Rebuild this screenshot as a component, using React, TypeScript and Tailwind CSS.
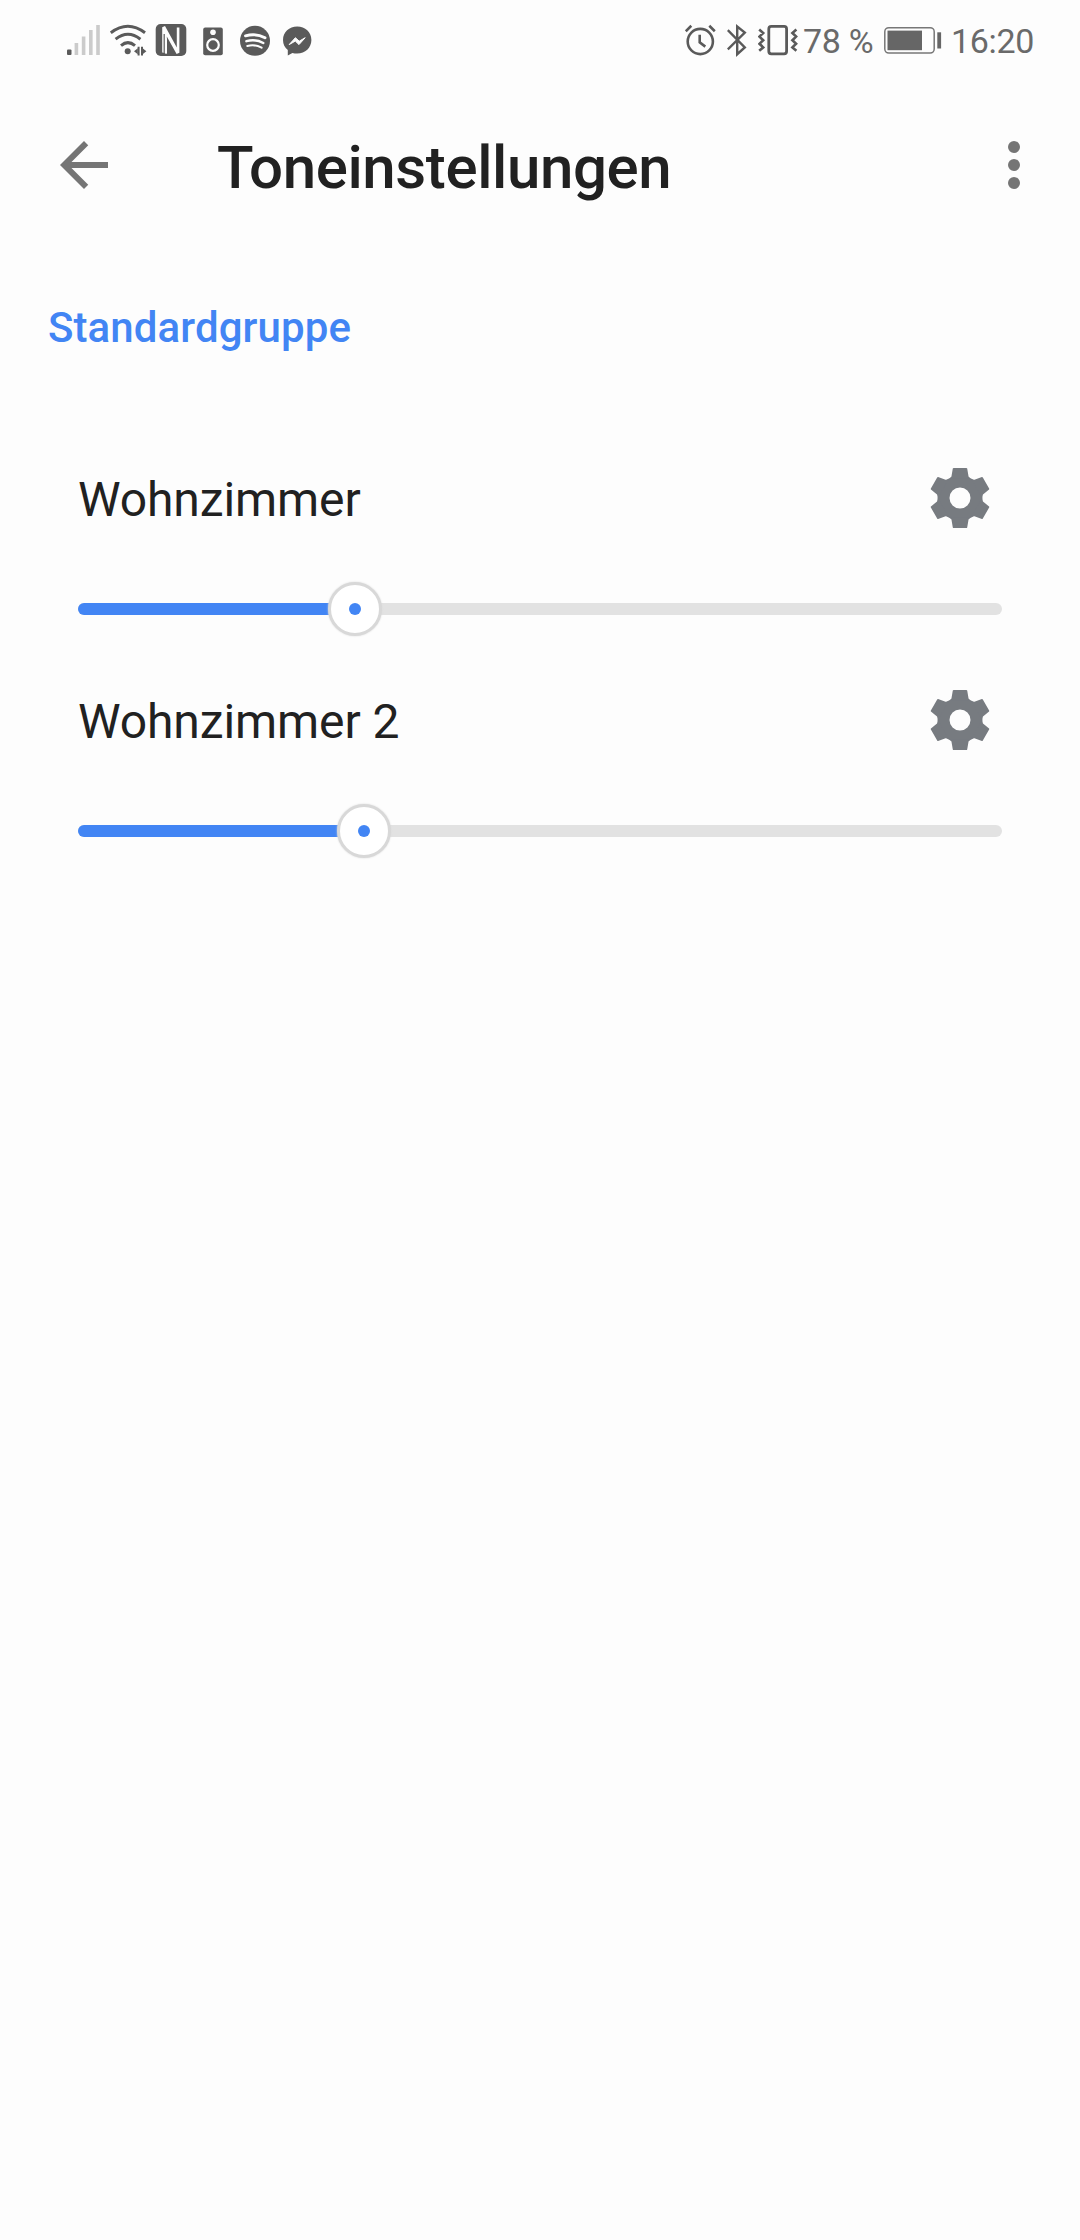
import React, { useState } from 'react';

const SignalIcon = () => (
  <svg width="34" height="36" viewBox="0 0 34 36" fill="#cbcbcb">
    <rect x="0" y="27.5" width="4.5" height="5.5" rx="1" fill="#5a5a5a" />
    <rect x="7.6" y="21" width="3.6" height="12" />
    <rect x="14.8" y="14.5" width="3.6" height="18.5" />
    <rect x="22" y="8" width="3.6" height="25" />
    <rect x="29.2" y="3" width="3.6" height="30" />
  </svg>
);

const WifiIcon = () => (
  <svg width="38" height="36" viewBox="0 0 38 36" fill="none" stroke="#5a5a5a" strokeWidth="3">
    <path d="M.8 10.8Q17.8 -2.2 35 10.8" />
    <path d="M5.6 17.2Q17.9 7.4 30.4 17.2" />
    <path d="M11 23.6Q17.9 17.6 25 23.6" />
    <circle cx="17.7" cy="29.2" r="3" fill="#5a5a5a" stroke="none" />
    <path d="M28.6 24.8v8.6M32 24.8v8.6" strokeWidth="2" />
    <path d="M24 29.2l3.8-3v6zM36.4 29.2l-3.8-3v6z" fill="#5a5a5a" stroke="none" />
  </svg>
);

const NfcIcon = () => (
  <svg width="32" height="36" viewBox="0 0 32 36">
    <rect x=".7" y="2" width="30.6" height="32" rx="5" fill="#5a5a5a" />
    <path d="M7.2 30.5V5.2L10 4L21.8 25.5V5.5H24.4V30.8L21.6 32L11.8 14.5V31.5z" fill="#fdfdfd" />
    <path d="M9.8 13V31.5H12V17z" fill="#fdfdfd" />
    <path d="M9.2 12V32" stroke="#5a5a5a" strokeWidth="1.2" />
  </svg>
);

const SpeakerIcon = () => (
  <svg width="20" height="36" viewBox="0 0 20 36">
    <rect x=".2" y="5.6" width="19.6" height="27.6" rx="2" fill="#5a5a5a" />
    <circle cx="10" cy="10.2" r="2.8" fill="#fdfdfd" />
    <circle cx="10" cy="23" r="5.8" fill="none" stroke="#fdfdfd" strokeWidth="2.2" />
  </svg>
);

const SpotifyIcon = () => (
  <svg width="30" height="36" viewBox="0 0 30 36" fill="none" stroke="#fdfdfd" strokeLinecap="round">
    <circle cx="15" cy="18.8" r="15" fill="#5a5a5a" stroke="none" />
    <path d="M5.5 13.8Q16 10.8 25 15.8" strokeWidth="2.9" />
    <path d="M6.4 19.1Q15.5 16.6 23.3 21" strokeWidth="2.5" />
    <path d="M7.3 24Q15 22 21.6 25.7" strokeWidth="2" />
  </svg>
);

const MessengerIcon = () => (
  <svg width="29" height="36" viewBox="0 0 29 36">
    <path d="M14.2 4.6C6.2 4.6 0 10.3 0 18c0 4.2 1.8 7.6 4.8 10.1v5.3l4.6-2.5c1.5.4 3.1.6 4.8.6 8 0 14.2-5.8 14.2-13.5S22.2 4.6 14.2 4.6z" fill="#5a5a5a" />
    <path d="M6.2 22.6l6.2-6.9 3.8 3.5 6-3.5-6.2 6.9-3.7-3.5z" fill="#fdfdfd" stroke="#fdfdfd" strokeWidth="1" strokeLinejoin="round" />
  </svg>
);

const AlarmIcon = () => (
  <svg width="31" height="36" viewBox="0 0 31 36" fill="none" stroke="#5a5a5a" strokeWidth="2.6">
    <circle cx="15.3" cy="19.5" r="12.6" />
    <path d="M.8 9.2l5.5-5.4M29.8 9.2l-5.5-5.4M14.7 12.8v7.6l5.6 4.2" />
  </svg>
);

const BluetoothIcon = () => (
  <svg width="20" height="36" viewBox="0 0 20 36" fill="none" stroke="#5a5a5a" strokeWidth="2.4">
    <path d="M.8 8.2l17 17.2-7.6 6.8V4.6l7.6 6L.8 27.4" />
  </svg>
);

const VibrateIcon = () => (
  <svg width="40" height="36" viewBox="0 0 40 36" fill="none" stroke="#5a5a5a">
    <rect x="10.8" y="4.4" width="17.8" height="27.4" rx="2.5" strokeWidth="2.8" />
    <path d="M1.2 7.5l4 3.5-3.7 3.6 3.7 3.6-3.7 3.6 3.7 3.6-4 3.4M38.4 7.5l-4 3.5 3.7 3.6-3.7 3.6 3.7 3.6-3.7 3.6 4 3.4" strokeWidth="2.6" />
  </svg>
);

const BatteryIcon = () => (
  <svg width="58" height="36" viewBox="0 0 58 36">
    <rect x=".8" y="5.7" width="49.4" height="25.4" rx="4" fill="none" stroke="#777" strokeWidth="1.5" />
    <rect x="3.5" y="8.6" width="34.5" height="19.6" fill="#666" />
    <rect x="53.3" y="10.3" width="3.8" height="16.2" fill="#666" />
  </svg>
);

const StatusBar = () => (
  <div className="flex h-20 items-center justify-between pl-[67px] pr-[45px] text-[34px] leading-none text-[#6a6a6a]">
    <div className="flex items-center">
      <SignalIcon />
      <span className="ml-[9px]"><WifiIcon /></span>
      <span className="ml-[7px]"><NfcIcon /></span>
      <span className="ml-4"><SpeakerIcon /></span>
      <span className="ml-[17px]"><SpotifyIcon /></span>
      <span className="ml-[13px]"><MessengerIcon /></span>
    </div>
    <div className="flex items-center">
      <AlarmIcon />
      <span className="ml-[11px]"><BluetoothIcon /></span>
      <span className="ml-[11px]"><VibrateIcon /></span>
      <span className="ml-[5px] w-[81px] whitespace-nowrap pt-px tracking-[-0.3px]">78 %</span>
      <BatteryIcon />
      <span className="ml-[9px] w-[84px] whitespace-nowrap pt-px tracking-[-0.3px]">16:20</span>
    </div>
  </div>
);

const Header = () => (
  <header className="flex h-[170px] items-center pl-12 pr-[30px]">
    <button aria-label="Zurück">
      <svg width="72" height="72" viewBox="0 0 24 24" fill="#757575">
        <path d="M20 11H7.83l5.59-5.59L12 4l-8 8 8 8 1.41-1.41L7.83 13H20v-2z" />
      </svg>
    </button>
    <h1 className="ml-[97px] flex-1 pt-[5px] text-[60px] font-medium leading-none tracking-[-0.4px] text-[#212121]">Toneinstellungen</h1>
    <button aria-label="Mehr">
      <svg width="72" height="72" viewBox="0 0 24 24" fill="#757575">
        <circle cx="12" cy="6" r="2" />
        <circle cx="12" cy="12" r="2" />
        <circle cx="12" cy="18" r="2" />
      </svg>
    </button>
  </header>
);

const TEETH = [0, 60, 120, 180, 240, 300];

const GearIcon = () => (
  <svg width="72" height="72" viewBox="-12 -12 24 24" fill="#777b80">
    <circle r="5.5" fill="none" stroke="#777b80" strokeWidth="4" />
    {TEETH.map(a => (
      <path key={a} d="M-3.5 -6.4L-2.85 -7.2L-2.4 -9.8Q-2.35 -10 -2.1 -10H2.1Q2.35 -10 2.4 -9.8L2.85 -7.2L3.5 -6.4z" transform={`rotate(${a})`} />
    ))}
  </svg>
);

interface SpeakerRowProps {
  name: string;
  initial: number;
}

const SpeakerRow: React.FC<SpeakerRowProps> = ({ name, initial }) => {
  const [volume, setVolume] = useState<number>(initial);

  return (
    <div className="h-[222px] px-[78px] pt-[42px]">
      <div className="flex h-[72px] items-center justify-between">
        <span className="pt-1 text-[48px] leading-none tracking-[-0.1px] text-[#212121]">{name}</span>
        <button aria-label="Einstellungen" className="mr-[6px]"><GearIcon /></button>
      </div>
      <div className="relative mt-[48px] flex h-[54px] items-center">
        <div className="h-3 w-full overflow-hidden rounded-full bg-[#e2e2e2]">
          <div className="h-full bg-[#4285f4]" style={{ width: `${volume}%` }}></div>
        </div>
        {/* thumb */}
        <div
          className="absolute top-0 flex h-[54px] w-[54px] -translate-x-1/2 items-center justify-center rounded-full border-[3px] border-[#d8d8d8] bg-white shadow-[0_0_2px_#d8d8d8]"
          style={{ left: `${volume}%` }}
        >
          <div className="h-3 w-3 rounded-full bg-[#4285f4]"></div>
        </div>
        <input
          type="range"
          min={0}
          max={100}
          step={0.01}
          value={volume}
          onChange={e => setVolume(parseFloat(e.target.value))}
          className="absolute inset-0 w-full opacity-0"
        />
      </div>
    </div>
  );
};

export default function App() {
  return (
    <div className="min-h-[2240px] w-full bg-[#fdfdfd] font-['Roboto',sans-serif]">
      <StatusBar />
      <Header />
      <h2 className="h-[170px] pl-12 pt-[57px] text-[42px] font-medium leading-[42px] tracking-[0.1px] text-[#4285f4]">Standardgruppe</h2>
      <SpeakerRow name="Wohnzimmer" initial={29.98} />
      <SpeakerRow name="Wohnzimmer 2" initial={30.95} />
    </div>
  );
}
